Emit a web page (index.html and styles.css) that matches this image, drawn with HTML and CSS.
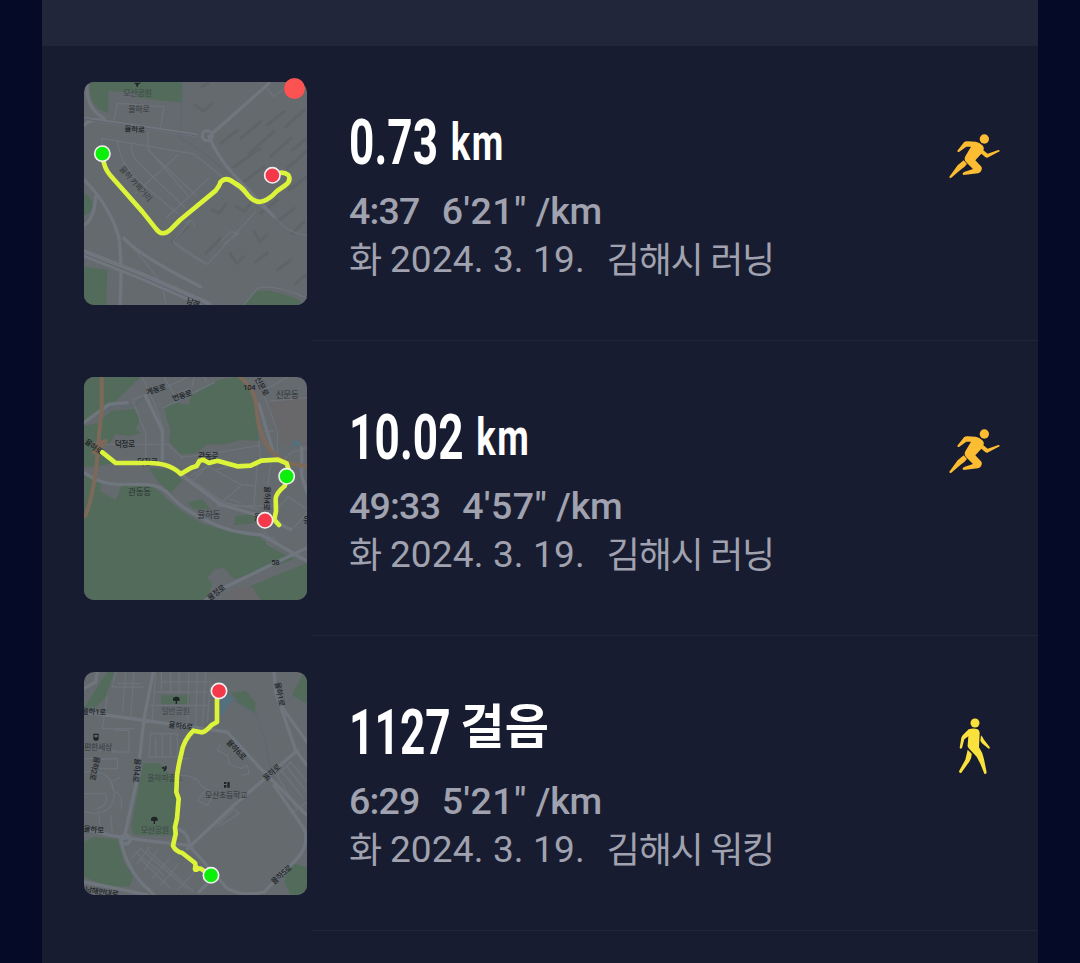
FILE: index.html
```
<!DOCTYPE html>
<html lang="ko">
<head>
  <meta charset="UTF-8" />
  <meta name="viewport" content="width=device-width, initial-scale=1.0" />
  <title>러닝 기록</title>
  <link rel="stylesheet" href="styles.css">
</head>
<body>
  <div class="panel">
    <div class="panel-head"></div>

    <div class="row">
      <div class="thumb">
        <svg class="map" viewBox="30 36 669 669">
          <g class="park">
            <path d="M48 36H327V97L270 92L188 82L187 68L103 62V130L75 118Q48 95 48 60Z"/>
            <path d="M30 370Q57 385 55 410Q50 430 30 437Z"/>
            <path d="M30 590L100 600L96 705H30Z"/>
            <path d="M505 705L550 663Q590 655 675 690L685 705Z"/>
          </g>
          <g class="building">
            <path d="M362 105L388 123L412 102M382 52L402 40M415 420L435 430L455 402M487 408L510 425L528 402M540 485L558 515L578 495M468 550L488 580L510 560"/>
            <path d="M440 220L490 180M500 205L560 155M580 165L630 125M525 250L600 185M635 170L690 120M480 290L560 235M590 260L650 205M655 240L699 205M510 335L570 290M640 295L695 245M645 360L699 320M560 430L610 390M610 455L660 415M655 490L690 455M395 550L440 505M295 515L340 470M545 575L580 550M610 600L650 570M665 640L695 615"/>
          </g>
          <g class="street">
            <path d="M85 205L360 252L450 325L600 440Q640 490 699 497M85 205L82 250M130 215Q140 280 185 325L310 430M172 225Q170 260 200 285L335 415M222 185V240L365 375M260 170L270 110L130 100L120 150M225 240L340 375M405 325L275 445M312 255L185 370M350 450L298 515L400 583L545 425M298 515Q330 550 400 583M440 515L470 485L495 490L450 520M335 460A12 12 0 1 1 360 470"/>
            <path d="M575 50L600 80L625 60M150 505Q230 590 260 640Q275 680 275 705M510 705L550 655Q600 640 699 685"/>
          </g>
          <path class="water" d="M325 36L318 205Q380 235 460 310"/>
          <g class="road">
            <path d="M30 145L365 195M410 195L585 40M30 165Q60 140 100 155M405 200Q430 260 480 315L600 440"/>
            <path d="M40 36Q30 110 90 145M30 330Q110 410 135 505Q145 590 138 705M150 505Q200 560 380 650M30 465Q60 450 65 380"/>
            <circle cx="400" cy="197" r="15"/>
          </g>
          <g class="road wide"><path d="M30 550L195 615L400 705"/></g>
          <path class="lane" d="M30 147L365 197M30 552L195 617L395 705"/>
          <g class="label">
            <text x="148" y="78" class="poi">모산공원</text>
            <text x="163" y="125" class="poi dark">율하로</text>
            <text x="151" y="184" transform="rotate(4 151 184)">율하로</text>
            <text x="135" y="298" class="poi dark" transform="rotate(48 135 298)">율하 카페거리</text>
            <text x="335" y="698" transform="rotate(20 335 698)">남해</text>
            <path d="M179 38H202L192 44V50H187V44Z"/>
          </g>
          <path class="track" d="M85 255Q90 295 108 315L205 425L245 475Q264 503 290 478L318 450L425 362Q438 345 439 337Q456 318 480 338Q502 350 515 367Q546 410 580 388Q594 380 609 363L635 345Q652 332 643 315Q625 300 595 316"/>
          <circle class="start" cx="85" cy="251" r="23"/>
          <circle class="end" cx="595" cy="316" r="23"/>
        </svg>
        <span class="badge"></span>
      </div>
      <div class="info">
        <div class="distance"><span class="num">0.73</span><span class="unit">km</span></div>
        <div class="pace"><span>4:37</span><span>6'21"</span><span>/km</span></div>
        <div class="date"><b>화</b><span>2024. 3. 19.</span><b>김해시 러닝</b></div>
      </div>
      <svg class="icon run" viewBox="0 0 270 240">
        <circle cx="163" cy="57" r="14"/>
        <path d="M82 92L102 67Q105 64 112 64L137 65Q149 67 157 76Q164 83 160 91L173 101L205 90Q210 90 209 94L172 113Q167 114 163 109L154 101L136 121L153 139Q158 145 153 154Q150 159 144 160L101 165Q97 163 98 159Q99 156 129 147L108 126Q101 119 106 109L123 80H109L87 96Q82 97 82 92Z"/>
        <path d="M101 121L111 132Q103 143 91 150L63 174Q58 175 58 170L83 136Z"/>
      </svg>
    </div>

    <div class="row">
      <div class="thumb">
        <svg class="map" viewBox="30 33 669 669">
          <g class="park">
            <path d="M30 33H200L120 110L30 165Z"/>
            <path d="M30 180L75 170L110 135L180 128L200 155L185 190L200 200L170 210L125 205L105 235L85 240L95 265L130 290L30 305Z"/>
            <path d="M350 90L440 40L495 33L525 70L545 110L548 170L555 225L500 222L450 235L400 235L365 262L320 265L285 225L290 190L280 165L270 120L310 110L345 118Z"/>
            <path d="M30 315L80 350L78 375L125 403L145 355L230 355L280 400L330 440L390 475L480 500L560 515L600 550L660 580L480 640L450 605L420 610L400 635L415 655L395 702H30Z"/>
            <path d="M225 305L300 312L325 345L290 380L250 345Z M340 410L385 400L410 430L360 430Z M485 450L540 445L545 470L480 478Z"/>
            <path d="M520 665L699 590V702H560Z"/>
          </g>
          <path class="plain" d="M585 105L699 85V240L625 235Q585 170 585 105Z"/>
          <path class="plain" d="M445 702L480 665L535 663L560 702Z"/>
          <path class="pond" d="M653 220L672 227L685 232L660 245Z"/>
          <path class="water" d="M95 135Q120 110 150 120T200 100L250 65L310 45L370 33"/>
          <g class="street">
            <path d="M175 100L215 205V290M205 33L240 110L268 190V280M175 100L235 80L340 35M300 85L270 33M270 125L420 50M300 85L345 70M90 235H280L325 275M320 275L430 260L555 238M400 300L350 350M350 330L400 300L500 355L540 360M430 420L500 360M430 420L600 420M470 300L430 310M550 290L540 415M590 295L570 440M320 320L450 410L555 430M555 225L560 290M500 410L470 400M645 390L600 435M640 390L699 430M600 450L650 495L699 440M555 480L600 530L680 580M360 33L355 60M390 33L395 45"/>
            <path d="M545 33Q590 130 610 200V270M570 195L600 195M640 33Q600 60 560 75M590 105L699 95M699 245L650 260L625 285"/>
            <circle cx="592" cy="527" r="13"/>
          </g>
          <g class="road">
            <path d="M30 170L105 115L160 110M215 90L265 195V280M555 115L600 265M325 330L440 415L560 450L650 490M30 320Q80 355 130 355H210Q260 355 290 390T400 465T560 505L699 585M699 545L450 665L395 702M683 245V330L699 380"/>
          </g>
          <g class="highway">
            <path d="M83 33V130L72 240Q65 370 34 450"/>
            <path d="M498 33Q545 70 548 130Q555 220 600 265Q640 300 699 300"/>
            <path d="M60 235L95 225M60 260L90 235"/>
          </g>
          <g class="label">
            <text x="220" y="88" transform="rotate(-18 220 88)">계동로</text>
            <text x="298" y="106" transform="rotate(-18 298 106)">번동로</text>
            <text x="508" y="73">104</text>
            <text x="542" y="38" transform="rotate(62 542 38)">신문로</text>
            <text x="605" y="95" class="area">신문동</text>
            <text x="122" y="243">덕정로</text>
            <text x="30" y="230" transform="rotate(37 30 230)">율하로</text>
            <text x="372" y="280">관동로</text>
            <text x="190" y="296">덕정로</text>
            <text x="162" y="386" class="area">관동동</text>
            <text x="370" y="456" class="area">율하동</text>
            <text x="572" y="360" transform="rotate(92 572 360)">율하4로</text>
            <text x="540" y="462">율</text>
            <text x="592" y="596">58</text>
            <text x="688" y="470">응</text>
            <text x="408" y="705" transform="rotate(-38 408 705)">율정로</text>
          </g>
          <path class="track" d="M85 259L125 291H225Q290 292 320 324L352 305L368 300L377 284L388 281L405 291L430 284L490 301L530 299L562 284L612 281L638 292L645 315L632 360Q605 382 605 400L606 435L601 461L615 477M601 461L573 463"/>
          <circle class="start" cx="638" cy="331" r="23"/>
          <circle class="end" cx="573" cy="463" r="23"/>
        </svg>
      </div>
      <div class="info">
        <div class="distance"><span class="num">10.02</span><span class="unit">km</span></div>
        <div class="pace"><span>49:33</span><span>4'57"</span><span>/km</span></div>
        <div class="date"><b>화</b><span>2024. 3. 19.</span><b>김해시 러닝</b></div>
      </div>
      <svg class="icon run" viewBox="0 0 270 240">
        <circle cx="163" cy="57" r="14"/>
        <path d="M82 92L102 67Q105 64 112 64L137 65Q149 67 157 76Q164 83 160 91L173 101L205 90Q210 90 209 94L172 113Q167 114 163 109L154 101L136 121L153 139Q158 145 153 154Q150 159 144 160L101 165Q97 163 98 159Q99 156 129 147L108 126Q101 119 106 109L123 80H109L87 96Q82 97 82 92Z"/>
        <path d="M101 121L111 132Q103 143 91 150L63 174Q58 175 58 170L83 136Z"/>
      </svg>
    </div>

    <div class="row">
      <div class="thumb">
        <svg class="map" viewBox="30 30 669 669">
          <g class="park">
            <path d="M100 30H120L95 105L65 135L30 138Z"/>
            <path d="M262 100H347V127H262Z"/>
            <path d="M470 92L515 87L545 122L543 155L500 128Z"/>
            <path d="M685 38L699 30V125L655 100Z"/>
            <path d="M208 305L255 303L285 335L310 340L303 520H185Q170 510 172 490Z"/>
            <path d="M30 540L60 525L130 532L150 600L178 645L165 675L90 670L30 645Z"/>
            <path d="M640 625L660 605L699 615V699H650L632 660Z"/>
          </g>
          <path class="pond" d="M440 115L460 95L483 112L460 130L450 155L438 160Z"/>
          <path class="water" d="M480 115L545 155L575 240L585 300L600 350"/>
          <g class="street">
            <path d="M125 30L115 75H210M130 65H200M155 30L145 155M180 30L170 160M245 30L235 170M262 30V90M262 60H400M290 30V95M315 30V95M345 30L340 200M370 30L365 190M395 30L385 190M410 50L400 180M240 90H400M230 130H400M100 100L85 200H180M120 205H165V270H115M125 265H50M125 290L60 295M230 215H310V285H225ZM245 230V280M265 215V285M290 215V285M30 290H130V320H60M30 330Q115 320 120 390Q125 450 60 455L30 450M30 395H95Q105 430 70 440M125 390Q150 400 140 440M75 460L80 510M110 460L115 510M140 345L110 360L120 390"/>
            <path d="M315 290L345 290M320 340Q370 340 380 370L420 395L400 430L370 415L395 385M440 245L430 265L460 280L465 305L500 320L520 310L525 335L505 340M425 495L480 440L495 455L440 490M610 340L650 300L699 360M610 340L670 445M625 330L690 410M640 315L699 390M650 455L699 420"/>
            <path d="M170 590L200 560L340 680M190 605L225 555M210 625L250 565M235 650L285 590M260 670L310 610M200 590L290 680M220 565L360 690M185 570L270 640M310 685L365 625"/>
          </g>
          <g class="road">
            <path d="M30 150L460 210L560 320L699 460M238 30L210 170L190 350L150 530M600 30L605 90L665 265L699 310M620 130L699 240M340 560L480 430L670 265M30 500L110 520L210 535L345 550M345 550L460 680Q510 705 570 690L660 600Q710 550 690 500L600 370M140 530Q150 600 200 660L240 699M70 30L65 60L30 80M345 540Q340 510 310 500"/>
            <circle cx="155" cy="532" r="14"/>
            <path d="M30 660L130 680L220 699M375 690L400 665"/>
          </g>
          <g class="label">
            <text x="23" y="155" transform="rotate(4 23 155)">율하1로</text>
            <text x="283" y="196" transform="rotate(6 283 196)">율하6로</text>
            <text x="262" y="155" class="poi">일반공원</text>
            <text x="30" y="263" class="poi dark">편한세상</text>
            <text x="62" y="282" transform="rotate(102 62 282)">율하2로</text>
            <text x="184" y="288" transform="rotate(96 184 288)">율하4로</text>
            <text x="220" y="356" class="poi">율하파출소</text>
            <text x="393" y="408" class="poi dark">모산초등학교</text>
            <text x="456" y="242" transform="rotate(47 456 242)">율하6로</text>
            <text x="602" y="62" transform="rotate(79 602 62)">율하1로</text>
            <text x="576" y="358" transform="rotate(-42 576 358)">율하로</text>
            <text x="200" y="512" class="poi">모산공원</text>
            <text x="28" y="508" transform="rotate(5 28 508)">율하로</text>
            <text x="32" y="691" transform="rotate(8 32 691)">남해안대로</text>
            <text x="600" y="668" transform="rotate(-41 600 668)">율하5로</text>
            <path d="M297 116Q295 104 307 104Q319 104 317 116L309 117V126H305V117Z"/>
            <path d="M231 476Q229 464 241 464Q253 464 251 476L243 477V486H239V477Z"/>
            <path fill-rule="evenodd" d="M58 215H74V232L70 236H62L58 232ZM61 219V226H71V219Z"/>
            <path d="M450 360H457V366H450ZM460 360H467V377H460ZM450 369H457V377H450ZM264 316L270 313V320H264ZM273 312H278V320L273 328H268Z"/>
          </g>
          <path class="track" d="M429 90V180L412 190Q392 212 382 211L358 206Q328 235 322 275Q311 320 309 345L307 390L314 410L309 470L303 495L305 515L297 551Q305 568 325 573L363 603L366 619L380 620L410 640"/>
          <circle class="blob" cx="366" cy="620" r="10"/>
          <circle class="end" cx="435" cy="87" r="23"/>
          <circle class="start" cx="411" cy="640" r="23"/>
        </svg>
      </div>
      <div class="info">
        <div class="distance"><span class="num">1127</span><span class="unit steps">걸음</span></div>
        <div class="pace"><span>6:29</span><span>5'21"</span><span>/km</span></div>
        <div class="date"><b>화</b><span>2024. 3. 19.</span><b>김해시 워킹</b></div>
      </div>
      <svg class="icon walk" viewBox="0 15 270 240">
        <circle cx="135" cy="54" r="13.5"/>
        <path d="M116 73Q131 68 143 73Q149 76 149 84L147 127Q159 144 162 163L170 202Q169 209 163 206L151 176L140 155L116 130Q112 126 113 119L115 94L103 103L96 129Q91 134 89 128L94 98Q96 92 101 88Z"/>
        <path d="M153 91Q159 97 162 104L179 126Q181 132 176 131L156 115L151 107Z"/>
        <path d="M113 134L125 146Q126 158 118 170L94 203Q88 206 87 199L106 164Z"/>
      </svg>
    </div>
  </div>
</body>
</html>
```
FILE: styles.css
```
body {
  margin: 0;
  height: 963px;
  overflow: hidden;
  background: #050b26;
  font-family: Roboto, "Noto Sans CJK KR", sans-serif;
}

.panel { height: 963px; margin: 0 42px; background: #181c30; }
.panel-head { height: 46px; background: #22263a; }

.row {
  display: flex;
  align-items: flex-start;
  box-sizing: border-box;
  height: 295px;
  padding: 36px 18px 0 42px;
  background: linear-gradient(#22263a, #22263a) right bottom / 727px 1px no-repeat;
}

/* map thumbnails */
.thumb { position: relative; width: 223px; height: 223px; flex: none; }
.map { display: block; width: 223px; height: 223px; border-radius: 10px; background: #646a6e; }
.map path, .map circle { stroke-linecap: round; stroke-linejoin: round; }
.park { fill: #526b5a; }
.plain { fill: #68686b; }
.pond { fill: #53707f; }
.water { fill: none; stroke: #5b6973; stroke-width: 4; }
.building { fill: none; stroke: #5f6567; stroke-width: 9; }
.street { fill: none; stroke: #6d737a; stroke-width: 4; }
.road { fill: none; stroke: #70767e; stroke-width: 10; }
.wide { stroke-width: 24; }
.lane { fill: none; stroke: #5e646c; stroke-width: 3; }
.highway { fill: none; stroke: #7d695a; stroke-width: 12; }
.label { fill: #202427; font-size: 23px; font-weight: 500; letter-spacing: -1px; }
.label .poi { fill: #3f4649; font-size: 24px; font-weight: 400; }
.label .dark { fill: #33393c; }
.label .area { fill: #2e3337; font-size: 26px; font-weight: 400; }
.track { fill: none; stroke: #dbf43a; stroke-width: 14; }
.blob { fill: #dbf43a; }
.start, .end { stroke: #f2eeee; stroke-width: 5; }
.start { fill: #0bef0b; }
.end { fill: #f5384a; }
.badge {
  position: absolute;
  top: -4px;
  right: 2px;
  width: 21px;
  height: 21px;
  border-radius: 50%;
  background: #fb5252;
}

/* texts */
.info { flex: 1; margin-left: 42px; white-space: nowrap; color: #a0a2af; }
.distance {
  height: 100px;
  line-height: 122px;
  color: #fff;
  font-weight: 700;
  transform: scaleX(.7);
  transform-origin: left;
}
.num { font-size: 63px; letter-spacing: .2px; }
.unit { display: inline-block; margin-left: 18px; font-size: 52px; line-height: 60px; letter-spacing: 2px; vertical-align: 4px; }
.steps {
  margin-left: 14px;
  font-size: 48px;
  letter-spacing: .3px;
  vertical-align: 10px;
  transform: scaleX(1.43);
  transform-origin: left;
}
.pace { display: flex; height: 50px; font-size: 37.5px; line-height: 58px; font-weight: 500; letter-spacing: -.8px; }
.pace span:nth-child(2) { margin-left: 22px; letter-spacing: .6px; }
.pace span:nth-child(3) { margin-left: 9px; letter-spacing: -.3px; }
.date { display: flex; font-size: 37px; line-height: 54px; }
.date span { margin: 1px 22px 0 9px; letter-spacing: .15px; }
.date b { font-size: 36px; font-weight: 400; line-height: 58px; letter-spacing: -1.25px; }

.icon { width: 90px; height: 80px; margin-top: 38px; flex: none; }
.run { fill: #fcbd32; }
.walk { fill: #fbe13b; }
```
